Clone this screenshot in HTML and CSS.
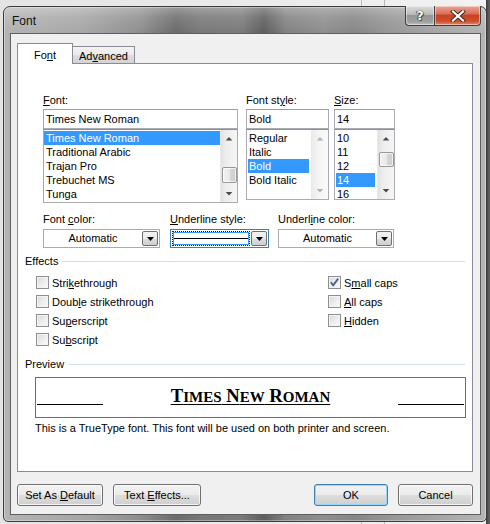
FILE: index.html
```html
<!DOCTYPE html>
<html>
<head>
<meta charset="utf-8">
<link rel="stylesheet" href="styles.css">
</head>
<body>
<div class="desk">
  <div class="window">
    <div class="titlebar">
      <span class="title">Font</span>
      <div class="caption">
        <div class="cap-btn help"><span>?</span></div>
        <div class="cap-btn close">
          <svg width="16" height="12" viewBox="0 0 16 12"><path d="M3 1.5 L13 10.5 M13 1.5 L3 10.5" stroke="#3b2a26" stroke-width="4" stroke-linecap="square"/><path d="M3 1.5 L13 10.5 M13 1.5 L3 10.5" stroke="#ffffff" stroke-width="2.2" stroke-linecap="square"/></svg>
        </div>
      </div>
    </div>
    <div class="client">
      <div class="tabs">
        <div class="tab active">Fo<u>n</u>t</div>
        <div class="tab">Ad<u>v</u>anced</div>
      </div>
      <div class="panel">
        <div class="cols">
          <div class="col col-font">
            <div class="lbl"><u>F</u>ont:</div>
            <div class="edit">Times New Roman</div>
            <div class="list list-font">
              <div class="items">
                <div class="item sel">Times New Roman</div>
                <div class="item">Traditional Arabic</div>
                <div class="item">Trajan Pro</div>
                <div class="item">Trebuchet MS</div>
                <div class="item">Tunga</div>
              </div>
              <div class="sb">
                <div class="sb-btn"><svg width="17" height="17" viewBox="0 0 17 17"><path d="M5 10.5 L8.5 7 L12 10.5 Z" fill="#4a4a4a"/></svg></div>
                <div class="sb-track"><div class="thumb thumb-font"></div></div>
                <div class="sb-btn"><svg width="17" height="17" viewBox="0 0 17 17"><path d="M5 7 L8.5 10.5 L12 7 Z" fill="#4a4a4a"/></svg></div>
              </div>
            </div>
          </div>
          <div class="col col-style">
            <div class="lbl">Font st<u>y</u>le:</div>
            <div class="edit">Bold</div>
            <div class="list list-short">
              <div class="items">
                <div class="item">Regular</div>
                <div class="item">Italic</div>
                <div class="item sel">Bold</div>
                <div class="item">Bold Italic</div>
              </div>
              <div class="sb sb-off">
                <div class="sb-btn"><svg width="17" height="17" viewBox="0 0 17 17"><path d="M5 10.5 L8.5 7 L12 10.5 Z" fill="#b4b4b4"/></svg></div>
                <div class="sb-track"></div>
                <div class="sb-btn"><svg width="17" height="17" viewBox="0 0 17 17"><path d="M5 7 L8.5 10.5 L12 7 Z" fill="#b4b4b4"/></svg></div>
              </div>
            </div>
          </div>
          <div class="col col-size">
            <div class="lbl"><u>S</u>ize:</div>
            <div class="edit">14</div>
            <div class="list list-short">
              <div class="items">
                <div class="item">10</div>
                <div class="item">11</div>
                <div class="item">12</div>
                <div class="item sel">14</div>
                <div class="item">16</div>
              </div>
              <div class="sb">
                <div class="sb-btn"><svg width="17" height="17" viewBox="0 0 17 17"><path d="M5 10.5 L8.5 7 L12 10.5 Z" fill="#4a4a4a"/></svg></div>
                <div class="sb-track"><div class="thumb thumb-size"></div></div>
                <div class="sb-btn"><svg width="17" height="17" viewBox="0 0 17 17"><path d="M5 7 L8.5 10.5 L12 7 Z" fill="#4a4a4a"/></svg></div>
              </div>
            </div>
          </div>
        </div>

        <div class="drops">
          <div class="drop drop-color">
            <div class="lbl">Font <u>c</u>olor:</div>
            <div class="dd"><div class="dd-val">Automatic</div><div class="dd-arrow"><svg width="7" height="4" viewBox="0 0 7 4"><path d="M0 0 H7 L3.5 4 Z" fill="#000"/></svg></div></div>
          </div>
          <div class="drop drop-ustyle">
            <div class="lbl"><u>U</u>nderline style:</div>
            <div class="dd dd-focus"><div class="dd-val"><div class="uline-sel"><div class="uline"></div></div></div><div class="dd-arrow"><svg width="7" height="4" viewBox="0 0 7 4"><path d="M0 0 H7 L3.5 4 Z" fill="#000"/></svg></div></div>
          </div>
          <div class="drop drop-ucolor">
            <div class="lbl">Underl<u>i</u>ne color:</div>
            <div class="dd"><div class="dd-val">Automatic</div><div class="dd-arrow"><svg width="7" height="4" viewBox="0 0 7 4"><path d="M0 0 H7 L3.5 4 Z" fill="#000"/></svg></div></div>
          </div>
        </div>

        <div class="sec-head sec-effects"><span>Effects</span><div class="sec-line"></div></div>
        <div class="checks">
          <div class="chk"><span class="box"></span><span>Stri<u>k</u>ethrough</span></div>
          <div class="chk"><span class="box"><svg width="11" height="11" viewBox="0 0 11 11"><path d="M1.8 5.2 L4.2 8.3 L9.2 1.6" fill="none" stroke="#4b5f8c" stroke-width="1.8"/></svg></span><span>S<u>m</u>all caps</span></div>
          <div class="chk"><span class="box"></span><span>Doub<u>l</u>e strikethrough</span></div>
          <div class="chk"><span class="box"></span><span><u>A</u>ll caps</span></div>
          <div class="chk"><span class="box"></span><span>Su<u>p</u>erscript</span></div>
          <div class="chk"><span class="box"></span><span><u>H</u>idden</span></div>
          <div class="chk"><span class="box"></span><span>Su<u>b</u>script</span></div>
        </div>

        <div class="sec-head sec-preview"><span>Preview</span><div class="sec-line"></div></div>
        <div class="preview">
          <div class="pv-line"></div>
          <div class="pv-text"><span class="pv-u">T<span class="sc">imes</span> N<span class="sc">ew</span> R<span class="sc">oman</span></span></div>
          <div class="pv-line"></div>
        </div>
        <div class="desc">This is a TrueType font. This font will be used on both printer and screen.</div>
      </div>
      <div class="buttons">
        <div class="btn btn-default">Set As <u>D</u>efault</div>
        <div class="btn btn-effects">Text <u>E</u>ffects...</div>
        <div class="btn btn-ok">OK</div>
        <div class="btn btn-cancel">Cancel</div>
      </div>
    </div>
  </div>
</div>
</body>
</html>
```
FILE: styles.css
```css
* { box-sizing: border-box; }
html, body { margin: 0; padding: 0; }
body {
  width: 490px;
  height: 524px;
  overflow: hidden;
  font-family: "Liberation Sans", Arial, sans-serif;
  font-size: 11px;
  color: #000;
  background: #cfcfcf;
}
u { text-decoration: underline; text-underline-offset: 1px; }

.desk {
  height: 524px;
  padding: 6px 0 0 3px;
  background:
    linear-gradient(90deg, transparent 361px, #bdbdbd 361px, #bdbdbd 362px, transparent 362px, transparent 384px, #b8b8b8 384px, #b8b8b8 385px, transparent 385px),
    linear-gradient(90deg, #e4e4e4 0, #ececec 300px, #f2f2f2 486px, #3a3a3a 486px, #6a6a6a 490px);
}

.window {
  width: 484px;
  height: 516px;
  border: 1px solid #3c3c3c;
  border-radius: 7px 7px 5px 5px;
  background:
    linear-gradient(180deg, rgba(255,255,255,0.32) 0, rgba(255,255,255,0.12) 10px, rgba(255,255,255,0) 26px),
    linear-gradient(90deg, #b3b3b3 0, #a6a6a6 80px, #8f8f8f 135px, #6b6b6b 172px, #777 195px, #7a7a7a 238px, #5d5d5d 260px, #828282 282px, #8e8e8e 320px, #868686 350px, #969696 385px, #a4a4a4 430px, #b6b6b6 484px);
  box-shadow: inset 0 0 0 1px rgba(255,255,255,0.35);
  display: flex;
  flex-direction: column;
}

.titlebar {
  height: 26px;
  display: flex;
  justify-content: space-between;
  align-items: flex-start;
  padding-left: 8px;
}
.title {
  font-size: 12px;
  line-height: 14px;
  margin-top: 7px;
  color: #101010;
}
.caption {
  display: flex;
  margin-top: -1px;
  margin-right: 5px;
}
.cap-btn {
  height: 20px;
  border: 1px solid #3e3e3e;
  border-top: none;
  display: flex;
  align-items: center;
  justify-content: center;
  box-shadow: inset 0 0 0 1px rgba(255,255,255,0.45);
}
.help {
  width: 29px;
  border-right: none;
  border-radius: 0 0 0 4px;
  background: linear-gradient(180deg, #dcdcdc 0, #b9b9b9 45%, #959595 50%, #a2a2a2 85%, #c4c4c4 100%);
}
.help span {
  font-family: "DejaVu Sans", sans-serif;
  font-weight: bold;
  font-size: 13px;
  line-height: 13px;
  color: #fff;
  text-shadow: 0 0 1px #333, 0 0 1px #333, 1px 1px 0 #555, -1px 0 0 #555;
}
.close {
  width: 47px;
  border-radius: 0 0 4px 0;
  background: linear-gradient(180deg, #e9a594 0, #d8705a 40%, #c8421f 50%, #cf4f2d 80%, #e08a6c 100%);
}

.client {
  margin-left: 6px;
  width: 471px;
  height: 482px;
  background: #f0f0f0;
  border: 1px solid #5f5f5f;
  padding: 9px 7px 0 6px;
  display: flex;
  flex-direction: column;
}

.tabs {
  display: flex;
  align-items: flex-end;
  height: 20px;
  position: relative;
  z-index: 1;
}
.tab {
  border: 1px solid #898c95;
  border-bottom: none;
  text-align: center;
}
.tab.active {
  width: 56px;
  height: 21px;
  margin-bottom: -1px;
  background: #fff;
  line-height: 22px;
}
.tab:not(.active) {
  width: 62px;
  height: 17px;
  border-left: none;
  background: linear-gradient(180deg, #f3f3f3 0, #ebebeb 50%, #dddddd 51%, #d4d4d4 100%);
  line-height: 18px;
}

.panel {
  height: 409px;
  background: #fff;
  border: 1px solid #898c95;
  padding-top: 30px;
}

.lbl {
  height: 13px;
  line-height: 13px;
  margin-bottom: 2px;
  white-space: nowrap;
}

.cols {
  display: flex;
  margin-left: 25px;
}
.col-font { width: 195px; }
.col-style { width: 83px; margin-left: 8px; }
.col-size { width: 61px; margin-left: 5px; }

.edit {
  height: 20px;
  border: 1px solid #a8abb2;
  border-top-color: #9a9ea6;
  line-height: 18px;
  padding-left: 2px;
  background: #fff;
}
.list {
  display: flex;
  border: 1px solid #a8abb2;
  border-top: 1px solid #8c9099;
  background: #fff;
}
.list-font { height: 74px; }
.list-short { height: 71px; }
.items {
  flex: 1;
  padding-top: 1px;
  overflow: hidden;
  white-space: nowrap;
}
.item {
  height: 14px;
  line-height: 14px;
  padding-left: 2px;
}
.item.sel {
  background: #3399ff;
  color: #fff;
}
.col-style .item.sel, .col-size .item.sel { margin: 0 2px 0 1px; padding-left: 1px; }

.sb {
  width: 17px;
  display: flex;
  flex-direction: column;
  background: linear-gradient(90deg, #e2e2e2 0, #ededed 30%, #f6f6f6 100%);
  border-left: 1px solid #eaeaea;
}
.sb-btn {
  height: 17px;
  flex: none;
  display: flex;
  align-items: center;
  justify-content: center;
}
.sb-track {
  flex: 1;
  display: flex;
  flex-direction: column;
  align-items: center;
}
.thumb {
  width: 15px;
  border: 1px solid #979797;
  border-radius: 2px;
  background: linear-gradient(90deg, #f2f2f2 0, #e9e9e9 50%, #d6d6d6 51%, #cfcfcf 100%);
  box-shadow: inset 0 0 0 1px rgba(255,255,255,0.7);
}
.thumb-font { margin-top: 20px; height: 16px; }
.thumb-size { margin-top: 5px; height: 15px; }
.sb-off { background: linear-gradient(90deg, #ececec 0, #f4f4f4 40%, #fafafa 100%); }

.drops {
  display: flex;
  margin-left: 25px;
  margin-top: 10px;
}
.drop-color { width: 117px; }
.drop-ustyle { width: 99px; margin-left: 10px; }
.drop-ucolor { width: 116px; margin-left: 9px; }
.drops .lbl { margin-bottom: 3px; }
.dd {
  height: 19px;
  border: 1px solid #a8abb2;
  background: #fff;
  display: flex;
  padding: 1px;
}
.dd-val {
  flex: 1;
  text-align: center;
  line-height: 15px;
}
.dd-arrow {
  width: 16px;
  border: 1px solid #707070;
  border-radius: 2px;
  background: linear-gradient(180deg, #f2f2f2 0, #ebebeb 50%, #dddddd 51%, #cfcfcf 100%);
  display: flex;
  align-items: center;
  justify-content: center;
  margin-left: 1px;
}
.dd-focus { border-color: #3c7fb1; }
.dd-focus .dd-val { display: flex; }
.uline-sel {
  flex: 1;
  border: 1px dotted #1b1b1b;
  display: flex;
  align-items: center;
  padding: 0 1px;
  box-shadow: inset 0 0 0 1px #3399ff;
}
.uline {
  flex: 1;
  height: 1px;
  background: #000;
}

.sec-head {
  display: flex;
  align-items: center;
  margin: 0 7px;
  height: 13px;
  line-height: 13px;
}
.sec-line {
  flex: 1;
  height: 1px;
  background: #d5dfe5;
  margin-left: 4px;
}
.sec-effects { margin-top: 7px; }
.sec-preview { margin-top: 9px; }

.checks {
  display: grid;
  grid-template-columns: 292px auto;
  grid-auto-rows: 19px;
  margin-left: 18px;
  margin-top: 5px;
}
.chk {
  display: flex;
  align-items: center;
  white-space: nowrap;
}
.box {
  width: 13px;
  height: 13px;
  border: 1px solid #8f8f8f;
  background: linear-gradient(135deg, #d9d9d9 0, #ececec 50%, #fbfbfb 100%);
  box-shadow: inset 0 0 0 1px #f4f4f4;
  margin-right: 3px;
  display: flex;
  align-items: center;
  justify-content: center;
  flex: none;
}

.preview {
  margin: 6px 0 0 17px;
  width: 431px;
  height: 41px;
  border: 1px solid #6d6d6d;
  display: flex;
  padding: 0 1px;
}
.pv-line {
  width: 66px;
  height: 1px;
  background: #000;
  margin-top: 26px;
}
.pv-text {
  flex: 1;
  text-align: center;
  font-family: "Liberation Serif", "Times New Roman", serif;
  font-weight: bold;
  font-size: 18.67px;
  line-height: 22px;
  padding-top: 7px;
  white-space: nowrap;
}
.pv-u {
  text-decoration: underline;
  text-decoration-thickness: 1px;
  text-underline-offset: 2px;
}
.sc {
  font-size: 15px;
  text-transform: uppercase;
}
.desc {
  margin: 4px 0 0 17px;
  line-height: 13px;
}

.buttons {
  display: flex;
  margin-top: 12px;
}
.btn {
  height: 22px;
  border: 1px solid #707070;
  border-radius: 3px;
  background: linear-gradient(180deg, #f2f2f2 0, #ebebeb 50%, #dddddd 51%, #cfcfcf 100%);
  box-shadow: inset 0 0 0 1px rgba(255,255,255,0.75);
  text-align: center;
  line-height: 20px;
  white-space: nowrap;
}
.btn-default { width: 86px; }
.btn-effects { width: 88px; margin-left: 10px; }
.btn-ok {
  width: 74px;
  margin-left: auto;
  border-color: #3c7fb1;
  box-shadow: inset 0 0 0 1px #9ad8f5;
}
.btn-cancel { width: 75px; margin-left: 10px; }
```
